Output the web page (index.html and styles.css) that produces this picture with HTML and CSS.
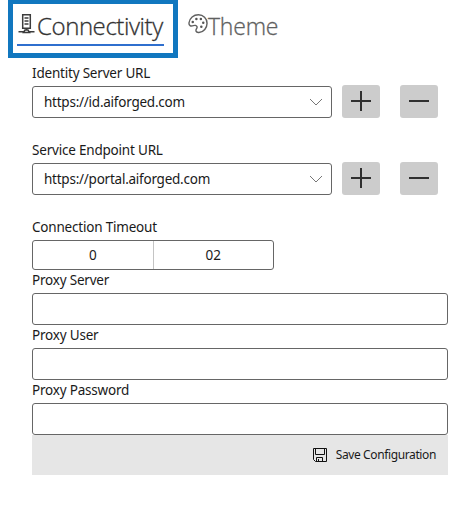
FILE: index.html
```html
<!DOCTYPE html>
<html lang="en">
<head>
<meta charset="utf-8">
<title>Settings</title>
<link rel="stylesheet" href="styles.css">
</head>
<body>
<nav class="tabs">
  <div class="tab-frame">
    <div class="tab active">
      <svg class="server" width="17" height="20" viewBox="0 0 17 20" fill="none" stroke="#3c3c3c" stroke-width="1.5"><path d="M4.700.8h7.600v13.400H4.700zM6.500 4h4M6.500 7h4M6.500 10h4M8.500 14v2.500M.5 17.800h5M11.500 17.800h5M5.500 18.500l1.500-2.500h3l1.500 2.500z"/></svg>
      <span class="t-conn">Connectivity</span>
    </div>
  </div>
  <div class="tab theme">
    <svg class="palette" width="20" height="20" viewBox="0 0 21 21" fill="none" stroke="#606060" stroke-width="1.5"><path d="M1 9.500C1.500 4 6 .8 11 .8c5 0 9 3.800 9 8.800 0 5-3.500 9.400-8.500 9.800-2 .2-3.600-.9-3.100-2.700.4-1.400 1.500-1.900 1.100-3.300-.5-1.600-2.300-1.700-3.900-1.200-2.300.8-4.800.4-4.600-2.700z"/><g fill="#555" stroke="none"><circle cx="5" cy="8.500" r="1.300"/><circle cx="8.800" cy="5.200" r="1.300"/><circle cx="13.500" cy="5.200" r="1.300"/><circle cx="16" cy="9.200" r="1.300"/><circle cx="14" cy="13.500" r="1.300"/></g></svg>
    <span class="t-theme">Theme</span>
  </div>
</nav>
<main class="form">
  <label class="label">Identity Server URL</label>
  <div class="row">
    <div class="box combo"><span>https://id.aiforged.com</span><svg width="14" height="8" viewBox="0 0 14 8" fill="none" stroke="#777"><path d="M1 1l6 6 6-6"/></svg></div>
    <button class="btn"><svg width="20" height="20" viewBox="0 0 20 20" stroke="#303030" stroke-width="2"><path d="M0 10h20M10 0v20"/></svg></button>
    <button class="btn"><svg width="20" height="20" viewBox="0 0 20 20" stroke="#303030" stroke-width="2"><path d="M0 10h20"/></svg></button>
  </div>
  <label class="label">Service Endpoint URL</label>
  <div class="row">
    <div class="box combo"><span>https://portal.aiforged.com</span><svg width="14" height="8" viewBox="0 0 14 8" fill="none" stroke="#777"><path d="M1 1l6 6 6-6"/></svg></div>
    <button class="btn"><svg width="20" height="20" viewBox="0 0 20 20" stroke="#303030" stroke-width="2"><path d="M0 10h20M10 0v20"/></svg></button>
    <button class="btn"><svg width="20" height="20" viewBox="0 0 20 20" stroke="#303030" stroke-width="2"><path d="M0 10h20"/></svg></button>
  </div>
  <label class="label">Connection Timeout</label>
  <div class="box timeout"><span>0</span><span>02</span></div>
  <label class="label">Proxy Server</label>
  <div class="box"></div>
  <label class="label">Proxy User</label>
  <div class="box"></div>
  <label class="label">Proxy Password</label>
  <div class="box"></div>
  <footer class="bar">
    <svg width="14" height="14" viewBox="0 0 14 14" fill="none" stroke="#111"><path d="M.5.5h13v13h-11l-2-2zM2.500.5v6h9v-6M3.500 13.500v-4h6v4M5.500 11v2.500"/></svg>
    <span>Save Configuration</span>
  </footer>
</main>
</body>
</html>
```
FILE: styles.css
```css
* { box-sizing: border-box; }
body {
  margin: 0;
  background: #fff;
  color: #1a1a1a;
  font: 14px/20px "Noto Sans", "Open Sans", sans-serif;
}
svg { display: block; flex: none; }
.tabs { display: flex; height: 63px; padding-left: 8px; }
.tab-frame {
  width: 170px;
  height: 58px;
  border: 5px solid #1177bf;
  border-top-width: 4px;
  padding-left: 4px;
}
.tab {
  display: flex;
  font: 300 24px/36px "Open Sans", "Noto Sans", sans-serif;
  -webkit-text-stroke: .3px currentColor;
  white-space: nowrap;
}
.active {
  width: 147px;
  height: 42px;
  padding-top: 4px;
  color: #333;
  border-bottom: 2px solid #2f6fce;
}
.server { margin: 6px 2px 0 1px; }
.theme { margin-left: 10px; padding-top: 8px; color: #606060; }
.palette { margin-top: 6px; }
.t-conn { letter-spacing: -.42px; }
.t-theme { font-size: 23px; letter-spacing: -.2px; }
.form { width: 416px; margin-left: 32px; }
.label {
  display: block;
  height: 23px;
  white-space: nowrap;
  font-size: 13.5px;
  letter-spacing: -.2px;
}
.row { display: flex; height: 32px; margin-bottom: 22px; }
.box {
  height: 32px;
  border: 1px solid #666;
  border-radius: 3px;
}
.combo {
  display: flex;
  flex: none;
  align-items: center;
  justify-content: space-between;
  width: 300px;
  margin-right: 10px;
  padding: 0 8px 0 11px;
  font-size: 13.5px;
  letter-spacing: -.24px;
}
.btn {
  display: flex;
  flex: none;
  align-items: center;
  justify-content: center;
  width: 38px;
  height: 33px;
  margin: -1px 20px 0 0;
  padding: 0 0 1px;
  border: 0;
  border-radius: 3px;
  background: #ccc;
}
.timeout { display: flex; width: 242px; height: 30px; font-size: 13.5px; }
.timeout span { flex: 1; text-align: center; line-height: 28px; }
.timeout span + span { border-left: 1px solid #c4c4c4; }
.bar {
  display: flex;
  align-items: center;
  justify-content: flex-end;
  height: 40px;
  padding-right: 12px;
  background: #e6e6e6;
  font-size: 12px;
  letter-spacing: -.38px;
}
.bar svg { margin-right: 9px; }
```
